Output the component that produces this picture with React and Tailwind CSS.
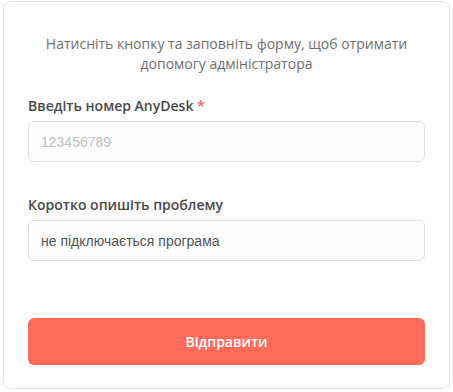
export default function App() {
  return (
    <div className="w-[453px] h-[392px] bg-white pt-px pl-[3px]" style={{ fontFamily: '"Open Sans", sans-serif' }}>
      <div className="w-[447px] h-[388px] border border-[#e3e5ea] rounded-lg bg-white px-6 pt-[32px] flex flex-col">
        <p className="text-center text-[14px] leading-[20px] text-[#707070] px-4">
          Натисніть кнопку та заповніть форму, щоб отримати допомогу адміністратора
        </p>

        <label className="mt-[22px] text-[14px] leading-[20px] font-semibold text-[#4a4a4a]">
          Введіть номер AnyDesk <span className="text-[#f0625a]">*</span>
        </label>
        <input
          type="text"
          placeholder="123456789"
          className="mt-[5px] h-[41px] w-full rounded-md border border-[#e2e2e2] bg-[#fefefe] px-3 text-[14px] text-[#555] placeholder:text-[#bdbdbd] outline-none"
          style={{ fontFamily: '"Liberation Sans", Arial, sans-serif' }}
        />

        <label className="mt-[33px] text-[14px] leading-[20px] font-semibold text-[#4a4a4a]">
          Коротко опишіть проблему
        </label>
        <input
          type="text"
          defaultValue="не підключається програма"
          className="mt-[5px] h-[41px] w-full rounded-md border border-[#e2e2e2] bg-[#fefefe] px-3 text-[14px] text-[#555] outline-none"
          style={{ fontFamily: '"Liberation Sans", Arial, sans-serif' }}
        />

        <button className="mt-[57px] h-[47px] w-full rounded-md bg-[#ff6b5b] text-white text-[14px] font-semibold">
          Відправити
        </button>
      </div>
    </div>
  );
}
